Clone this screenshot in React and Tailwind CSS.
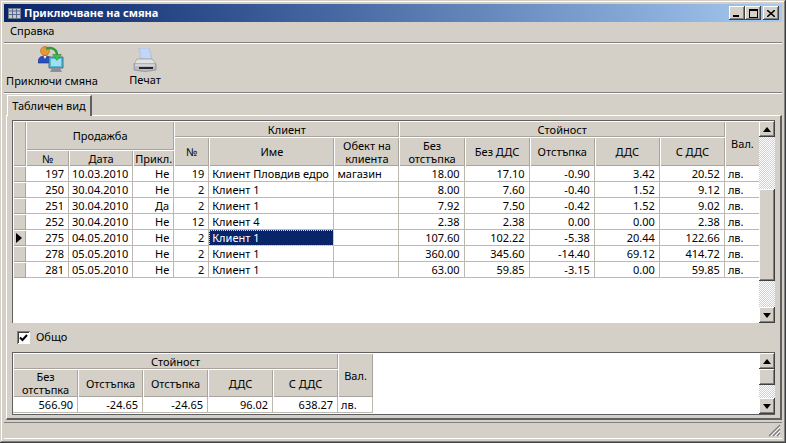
import { Fragment } from 'react';

const RAISED = 'shadow-[inset_-1px_-1px_#404040,inset_1px_1px_#fff,inset_-2px_-2px_#808080]';
const HEAD = 'p-0 h-4 bg-[#d4d0c8] text-center font-normal leading-[13px] shadow-[inset_1px_1px_#fff,inset_-1px_-1px_#a8a49c]';
const NUM = 'h-4 p-0 pr-[4px] text-right leading-none whitespace-nowrap border-r border-b border-[#bdb9b1]';
const TXT = 'h-4 p-0 pl-[3px] text-left leading-none whitespace-nowrap border-r border-b border-[#bdb9b1]';
const DITHER = 'grow bg-[repeating-conic-gradient(#d4d0c8_0_25%,#ffffff_0_50%)] bg-[length:2px_2px]';

const rows = [
  ['197', '10.03.2010', 'Не', '19', 'Клиент Пловдив едро', 'магазин', '18.00', '17.10', '-0.90', '3.42', '20.52'],
  ['250', '30.04.2010', 'Не', '2', 'Клиент 1', '', '8.00', '7.60', '-0.40', '1.52', '9.12'],
  ['251', '30.04.2010', 'Да', '2', 'Клиент 1', '', '7.92', '7.50', '-0.42', '1.52', '9.02'],
  ['252', '30.04.2010', 'Не', '12', 'Клиент 4', '', '2.38', '2.38', '0.00', '0.00', '2.38'],
  ['275', '04.05.2010', 'Не', '2', 'Клиент 1', '', '107.60', '102.22', '-5.38', '20.44', '122.66'],
  ['278', '05.05.2010', 'Не', '2', 'Клиент 1', '', '360.00', '345.60', '-14.40', '69.12', '414.72'],
  ['281', '05.05.2010', 'Не', '2', 'Клиент 1', '', '63.00', '59.85', '-3.15', '0.00', '59.85'],
];

const gridCols = [13, 43, 64, 41, 35, 125, 65, 65, 65, 65, 65, 65, 35];
const totalCols = [65, 65, 65, 65, 65, 35];

const Triangle = ({ up }) => (
  <svg width="8" height="5" viewBox="0 0 8 5">
    <path d={up ? 'M4 0 L8 5 L0 5 Z' : 'M0 0 L8 0 L4 5 Z'} fill="#000" />
  </svg>
);

const ScrollBtn = ({ up }) => (
  <div className={`w-4 h-4 shrink-0 bg-[#d4d0c8] flex items-center justify-center ${RAISED}`}>
    <Triangle up={up} />
  </div>
);

const Scrollbar = ({ before, thumb }) => (
  <div className="w-4 h-full shrink-0 flex flex-col">
    <ScrollBtn up />
    <div className={`shrink-0 ${DITHER}`} style={{ height: before, flexGrow: 0 }} />
    <div className={`shrink-0 bg-[#d4d0c8] ${RAISED}`} style={{ height: thumb }} />
    <div className={DITHER} />
    <ScrollBtn />
  </div>
);

const TitleBtn = ({ children, className = '' }) => (
  <div className={`w-4 h-[14px] bg-[#d4d0c8] flex items-center justify-center ${RAISED} ${className}`}>
    {children}
  </div>
);

const UsersIcon = () => (
  <svg width="28" height="27" viewBox="0 0 28 27">
    <circle cx="7" cy="5" r="4.5" fill="#e8963a" stroke="#b8691e" strokeWidth="0.6" />
    <path d="M0 17 C0 11 3 10 7 10 C11 10 14 11 14 17 Z" fill="#2a4fc0" stroke="#1b2f80" strokeWidth="0.6" />
    <path d="M5.5 10 L7 13 L8.5 10 Z" fill="#fff" />
    <path d="M11 11 L25 11 L25 22 L11 22 Z" fill="#55b9dc" stroke="#3a5a70" strokeWidth="0.8" />
    <path d="M13 13 L23 13 L23 20 L13 20 Z" fill="#9fe0f0" />
    <path d="M14 22 L22 22 L24 26 L12 26 Z" fill="#8a9098" />
    <path d="M8 2.5 C14 1 19 3 19 9" fill="none" stroke="#2f9a3a" strokeWidth="2.4" />
    <path d="M14.5 8.5 L23.5 8.5 L19 14.5 Z" fill="#3cc04a" stroke="#24803a" strokeWidth="0.5" />
  </svg>
);

const PrinterIcon = () => (
  <svg width="24" height="25" viewBox="0 0 24 25">
    <path d="M6 0 L16 0 L19 11 L8 11 Z" fill="#c4d6f6" stroke="#9fb4dc" strokeWidth="0.6" />
    <path d="M4 11 L19 11 L23 16 L1 16 Z" fill="#e2e2e2" stroke="#8e8e8e" strokeWidth="0.6" />
    <path d="M1 16 L23 16 L23 22 Q12 25 1 22 Z" fill="#b8bcc2" stroke="#7e8086" strokeWidth="0.6" />
    <path d="M6 19 L20 19 L20 21 L6 21 Z" fill="#26262a" />
    <path d="M2 17 L22 17" stroke="#f2f2f2" strokeWidth="1" />
  </svg>
);

const TitleIcon = () => (
  <svg width="13" height="11" viewBox="0 0 13 11">
    <rect x="0.5" y="0.5" width="12" height="10" fill="#c8c8d0" stroke="#70788c" />
    <path d="M1 3 H12 M4.5 1 V10 M8.5 1 V10 M1 6.5 H12" stroke="#5a6a90" strokeWidth="1" />
  </svg>
);

const Grip = () => (
  <svg width="13" height="13" viewBox="0 0 13 13" className="absolute right-[1px] bottom-[1px]">
    <path d="M12 1 L1 12 M12 5 L5 12 M12 9 L9 12" stroke="#808080" strokeWidth="1.4" />
    <path d="M12 3 L3 12 M12 7 L7 12 M12 11 L11 12" stroke="#fff" strokeWidth="1" />
  </svg>
);

const Separator = () => <div className="h-[2px] border-t border-t-[#808080] border-b border-b-white" />;

export default function App() {
  return (
    <div className={"w-[786px] h-[443px] overflow-hidden relative bg-[#d4d0c8] text-[11px] text-black font-['Noto_Sans','DejaVu_Sans',sans-serif] p-1 flex flex-col shadow-[inset_-1px_-1px_#404040,inset_1px_1px_#d4d0c8,inset_-2px_-2px_#808080,inset_2px_2px_#fff]"}>
      {/* Title bar */}
      <div className="h-[18px] shrink-0 flex items-center pl-1 pr-[3px] bg-gradient-to-r from-[#0a246a] to-[#a6caf0]">
        <TitleIcon />
        <span className="ml-[3px] font-bold text-white">Приключване на смяна</span>
        <div className="ml-auto flex">
          <TitleBtn>
            <div className="w-[6px] h-[2px] bg-black mt-[6px] mr-[2px]" />
          </TitleBtn>
          <TitleBtn>
            <div className="w-[9px] h-[9px] border border-black border-t-2" />
          </TitleBtn>
          <TitleBtn className="ml-[2px]">
            <svg width="8" height="7" viewBox="0 0 8 7">
              <path d="M0 0 L8 7 M8 0 L0 7" stroke="#000" strokeWidth="1.5" />
            </svg>
          </TitleBtn>
        </div>
      </div>

      {/* Menu */}
      <div className="h-[19px] shrink-0 flex items-center pl-[6px]">Справка</div>
      <div className="h-[1px] shrink-0" />
      <Separator />

      {/* Toolbar */}
      <div className="h-[48px] shrink-0 flex pl-[2px]">
        <button className="w-[92px] flex flex-col items-center pt-[2px]">
          <UsersIcon />
          <span className="leading-[14px] mt-[1px]">Приключи смяна</span>
        </button>
        <button className="w-[40px] ml-[27px] flex flex-col items-center pt-[4px]">
          <PrinterIcon />
          <span className="leading-[14px]">Печат</span>
        </button>
      </div>
      <Separator />

      {/* Tab strip */}
      <div className="h-[20px] mt-[1px] shrink-0 pl-[3px] flex">
        <div className="w-[85px] h-[21px] z-10 bg-[#d4d0c8] flex items-center justify-center border-t border-l border-t-white border-l-white border-r-2 border-r-[#606060]">
          Табличен вид
        </div>
      </div>

      {/* Tab page */}
      <div className="h-[305px] shrink-0 ml-[2px] mr-[0px] border-t border-l border-t-white border-l-white border-r-2 border-b-2 border-r-[#606060] border-b-[#606060] pl-[5px] pr-[5px] pt-[4px] flex flex-col">
        {/* Main grid */}
        <div className="h-[203px] shrink-0 flex bg-white border-t border-l border-t-[#606060] border-l-[#606060]">
          <div className="flex-1 min-w-0">
            <table className="table-fixed border-separate border-spacing-0 w-[747px]">
              <colgroup>
                {gridCols.map((w, i) => (
                  <col key={i} style={{ width: w }} />
                ))}
              </colgroup>
              <thead>
                <tr>
                  <th rowSpan={3} className={HEAD} />
                  <th colSpan={3} rowSpan={2} className={HEAD}>Продажба</th>
                  <th colSpan={3} className={HEAD}>Клиент</th>
                  <th colSpan={5} className={HEAD}>Стойност</th>
                  <th rowSpan={3} className={HEAD}>Вал.</th>
                </tr>
                <tr className="h-[13px]">
                  <th rowSpan={2} className={HEAD}>№</th>
                  <th rowSpan={2} className={HEAD}>Име</th>
                  <th rowSpan={2} className={HEAD}>Обект на<br />клиента</th>
                  <th rowSpan={2} className={HEAD}>Без<br />отстъпка</th>
                  <th rowSpan={2} className={HEAD}>Без ДДС</th>
                  <th rowSpan={2} className={HEAD}>Отстъпка</th>
                  <th rowSpan={2} className={HEAD}>ДДС</th>
                  <th rowSpan={2} className={HEAD}>С ДДС</th>
                </tr>
                <tr>
                  <th className={HEAD}>№</th>
                  <th className={HEAD}>Дата</th>
                  <th className={HEAD}>Прикл.</th>
                </tr>
              </thead>
              <tbody>
                {rows.map((r, i) => (
                  <tr key={r[0]}>
                    <td className={HEAD}>
                      {i === 4 && (
                        <svg width="6" height="10" viewBox="0 0 6 10" className="ml-[3px]">
                          <path d="M0 0 L6 5 L0 10 Z" fill="#000" />
                        </svg>
                      )}
                    </td>
                    <td className={NUM}>{r[0]}</td>
                    <td className={TXT}>{r[1]}</td>
                    <td className={NUM}>{r[2]}</td>
                    <td className={NUM}>{r[3]}</td>
                    {i === 4 ? (
                      <td className={`${TXT} bg-[#0a246a] text-white outline-1 outline-dotted outline-[#e8e0a0] -outline-offset-1`}>{r[4]}</td>
                    ) : (
                      <td className={TXT}>{r[4]}</td>
                    )}
                    <td className={TXT}>{r[5]}</td>
                    {r.slice(6).map((v, j) => (
                      <Fragment key={j}>
                        <td className={NUM}>{v}</td>
                      </Fragment>
                    ))}
                    <td className={TXT}>лв.</td>
                  </tr>
                ))}
              </tbody>
            </table>
          </div>
          <Scrollbar before={52} thumb={92} />
        </div>

        {/* Checkbox */}
        <div className="h-[29px] shrink-0 flex items-center pl-[5px]">
          <div className="w-[13px] h-[13px] bg-white flex items-center justify-center shadow-[inset_1px_1px_#808080,inset_-1px_-1px_#fff,inset_2px_2px_#404040]">
            <svg width="9" height="8" viewBox="0 0 9 8">
              <path d="M1 3.5 L3.5 6 L8 1" fill="none" stroke="#000" strokeWidth="2" />
            </svg>
          </div>
          <span className="ml-[6px]">Общо</span>
        </div>

        {/* Totals */}
        <div className="h-[63px] shrink-0 flex bg-white border-t border-l border-t-[#606060] border-l-[#606060] border-b border-b-[#606060]">
          <div className="flex-1 min-w-0">
            <table className="table-fixed border-separate border-spacing-0 w-[360px]">
              <colgroup>
                {totalCols.map((w, i) => (
                  <col key={i} style={{ width: w }} />
                ))}
              </colgroup>
              <thead>
                <tr>
                  <th colSpan={5} className={HEAD}>Стойност</th>
                  <th rowSpan={2} className={HEAD}>Вал.</th>
                </tr>
                <tr className="h-[28px]">
                  <th className={HEAD}>Без<br />отстъпка</th>
                  <th className={HEAD}>Отстъпка</th>
                  <th className={HEAD}>Отстъпка</th>
                  <th className={HEAD}>ДДС</th>
                  <th className={HEAD}>С ДДС</th>
                </tr>
              </thead>
              <tbody>
                <tr>
                  <td className={NUM}>566.90</td>
                  <td className={NUM}>-24.65</td>
                  <td className={NUM}>-24.65</td>
                  <td className={NUM}>96.02</td>
                  <td className={NUM}>638.27</td>
                  <td className={TXT}>лв.</td>
                </tr>
              </tbody>
            </table>
          </div>
          <Scrollbar before={0} thumb={16} />
        </div>
      </div>

      {/* Status bar */}
      <div className="relative h-[17px] mt-[2px] shrink-0 border-t border-t-[#808080] border-b border-b-white">
        <Grip />
      </div>
    </div>
  );
}
